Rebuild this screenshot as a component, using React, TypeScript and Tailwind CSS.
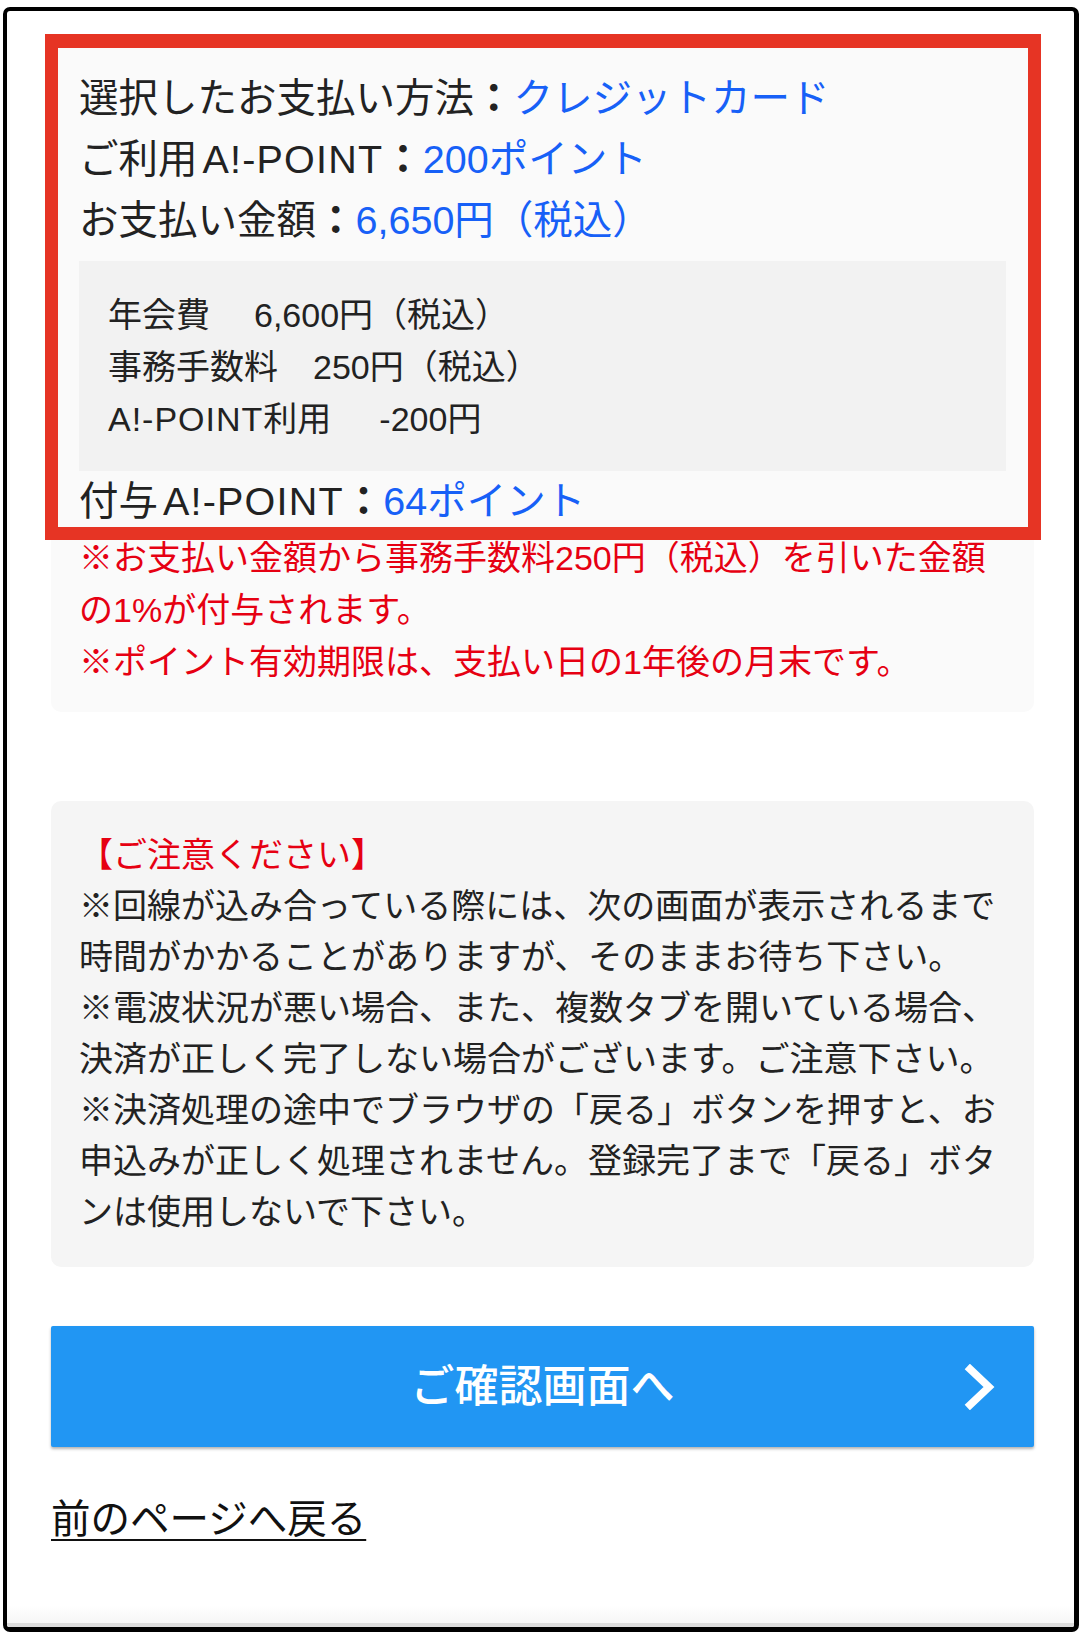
import React from "react";

function Colon() {
  return <span className="font-bold">：</span>;
}

function Pt({ big }: { big?: boolean }) {
  return <span className={big ? "ml-[5px] tracking-[1.2px]" : "tracking-[1px]"}>A!-POINT</span>;
}

export default function App() {
  return (
    <div className="w-[1082px] h-[1638px] bg-white pl-[3px] pt-[7px] font-['Liberation_Sans','Noto_Sans_CJK_JP',sans-serif]">
      <div className="w-[1076px] h-[1625px] border-l-4 border-t-4 border-r-[5px] border-b-[5px] border-black rounded-[7px] bg-white flex flex-col overflow-hidden">
        <div className="pl-[44px] pr-[40px] pt-[36px] flex flex-col">
          {/* Summary panel */}
          <div className="relative rounded-[10px] bg-[#fafafa] px-[28px] pt-[21px] pb-[24px]">
            <div className="text-[39.5px] leading-[61px] text-[#222]">
              <p>
                選択したお支払い方法<Colon />
                <span className="text-[#1760f7]">クレジットカード</span>
              </p>
              <p>
                ご利用<Pt big /><Colon />
                <span className="text-[#1760f7]">200ポイント</span>
              </p>
              <p>
                お支払い金額<Colon />
                <span className="text-[#1760f7]">6,650円（税込）</span>
              </p>
            </div>
            <div className="mt-[10px] bg-[#f2f2f2] pl-[29px] pr-[20px] pt-[28px] pb-[26px] text-[34px] leading-[52px] text-[#222]">
              <p>
                年会費<span className="ml-[44px]">6,600円（税込）</span>
              </p>
              <p>
                事務手数料<span className="ml-[35px]">250円（税込）</span>
              </p>
              <p>
                <Pt />利用<span className="ml-[48px]">-200円</span>
              </p>
            </div>
            <p className="text-[39.5px] leading-[61px] text-[#222]">
              付与<Pt big /><Colon />
              <span className="text-[#1760f7]">64ポイント</span>
            </p>
            <div className="text-[34px] leading-[52px] text-[#e60012]">
              <p>
                ※お支払い金額から事務手数料250円（税込）を引いた金額
                <br />
                の1%が付与されます。
              </p>
              <p>※ポイント有効期限は、支払い日の1年後の月末です。</p>
            </div>
            <div className="pointer-events-none absolute -left-[6px] -right-[7px] -top-[13px] h-[506px] border-[13px] border-t-[14px] border-[#e63424]" />
          </div>

          {/* Notice panel */}
          <div className="mt-[89px] rounded-[10px] bg-[#f5f5f5] px-[28px] pt-[29px] pb-[29px] text-[34px] leading-[51px] text-[#222]">
            <p className="text-[#e60012]">【ご注意ください】</p>
            <p>
              ※回線が込み合っている際には、次の画面が表示されるまで
              <br />
              時間がかかることがありますが、そのままお待ち下さい。
            </p>
            <p>
              ※電波状況が悪い場合、また、複数タブを開いている場合、
              <br />
              決済が正しく完了しない場合がございます。ご注意下さい。
            </p>
            <p>
              ※決済処理の途中でブラウザの「戻る」ボタンを押すと、お
              <br />
              申込みが正しく処理されません。登録完了まで「戻る」ボタ
              <br />
              ンは使用しないで下さい。
            </p>
          </div>

          {/* Button */}
          <button className="mt-[59px] h-[121px] w-full bg-[#2196f3] rounded-[2px] shadow-[0_2px_3px_rgba(0,0,0,0.3)] grid grid-cols-[1fr_auto_1fr] items-center text-white text-[44px] font-medium">
            <span />
            <span className="leading-none">ご確認画面へ</span>
            <span className="flex justify-end pr-[38px]">
              <svg width="32" height="46" viewBox="0 0 32 46" fill="none">
                <polyline
                  points="6,5 25,23 6,41"
                  stroke="white"
                  strokeWidth="7.5"
                  strokeLinecap="square"
                  strokeLinejoin="miter"
                  fill="none"
                />
              </svg>
            </span>
          </button>

          {/* Back link */}
          <a
            href="#"
            className="mt-[48px] self-start text-[39.5px] leading-[48px] text-[#111] underline decoration-2 underline-offset-[6px]"
          >
            前のページへ戻る
          </a>
        </div>
        <div className="flex-1" />
        <div className="h-[18px] bg-linear-to-b from-white to-[#f6f6f6]" />
        <div className="h-[4px] bg-[#dcdcdc]" />
      </div>
    </div>
  );
}
